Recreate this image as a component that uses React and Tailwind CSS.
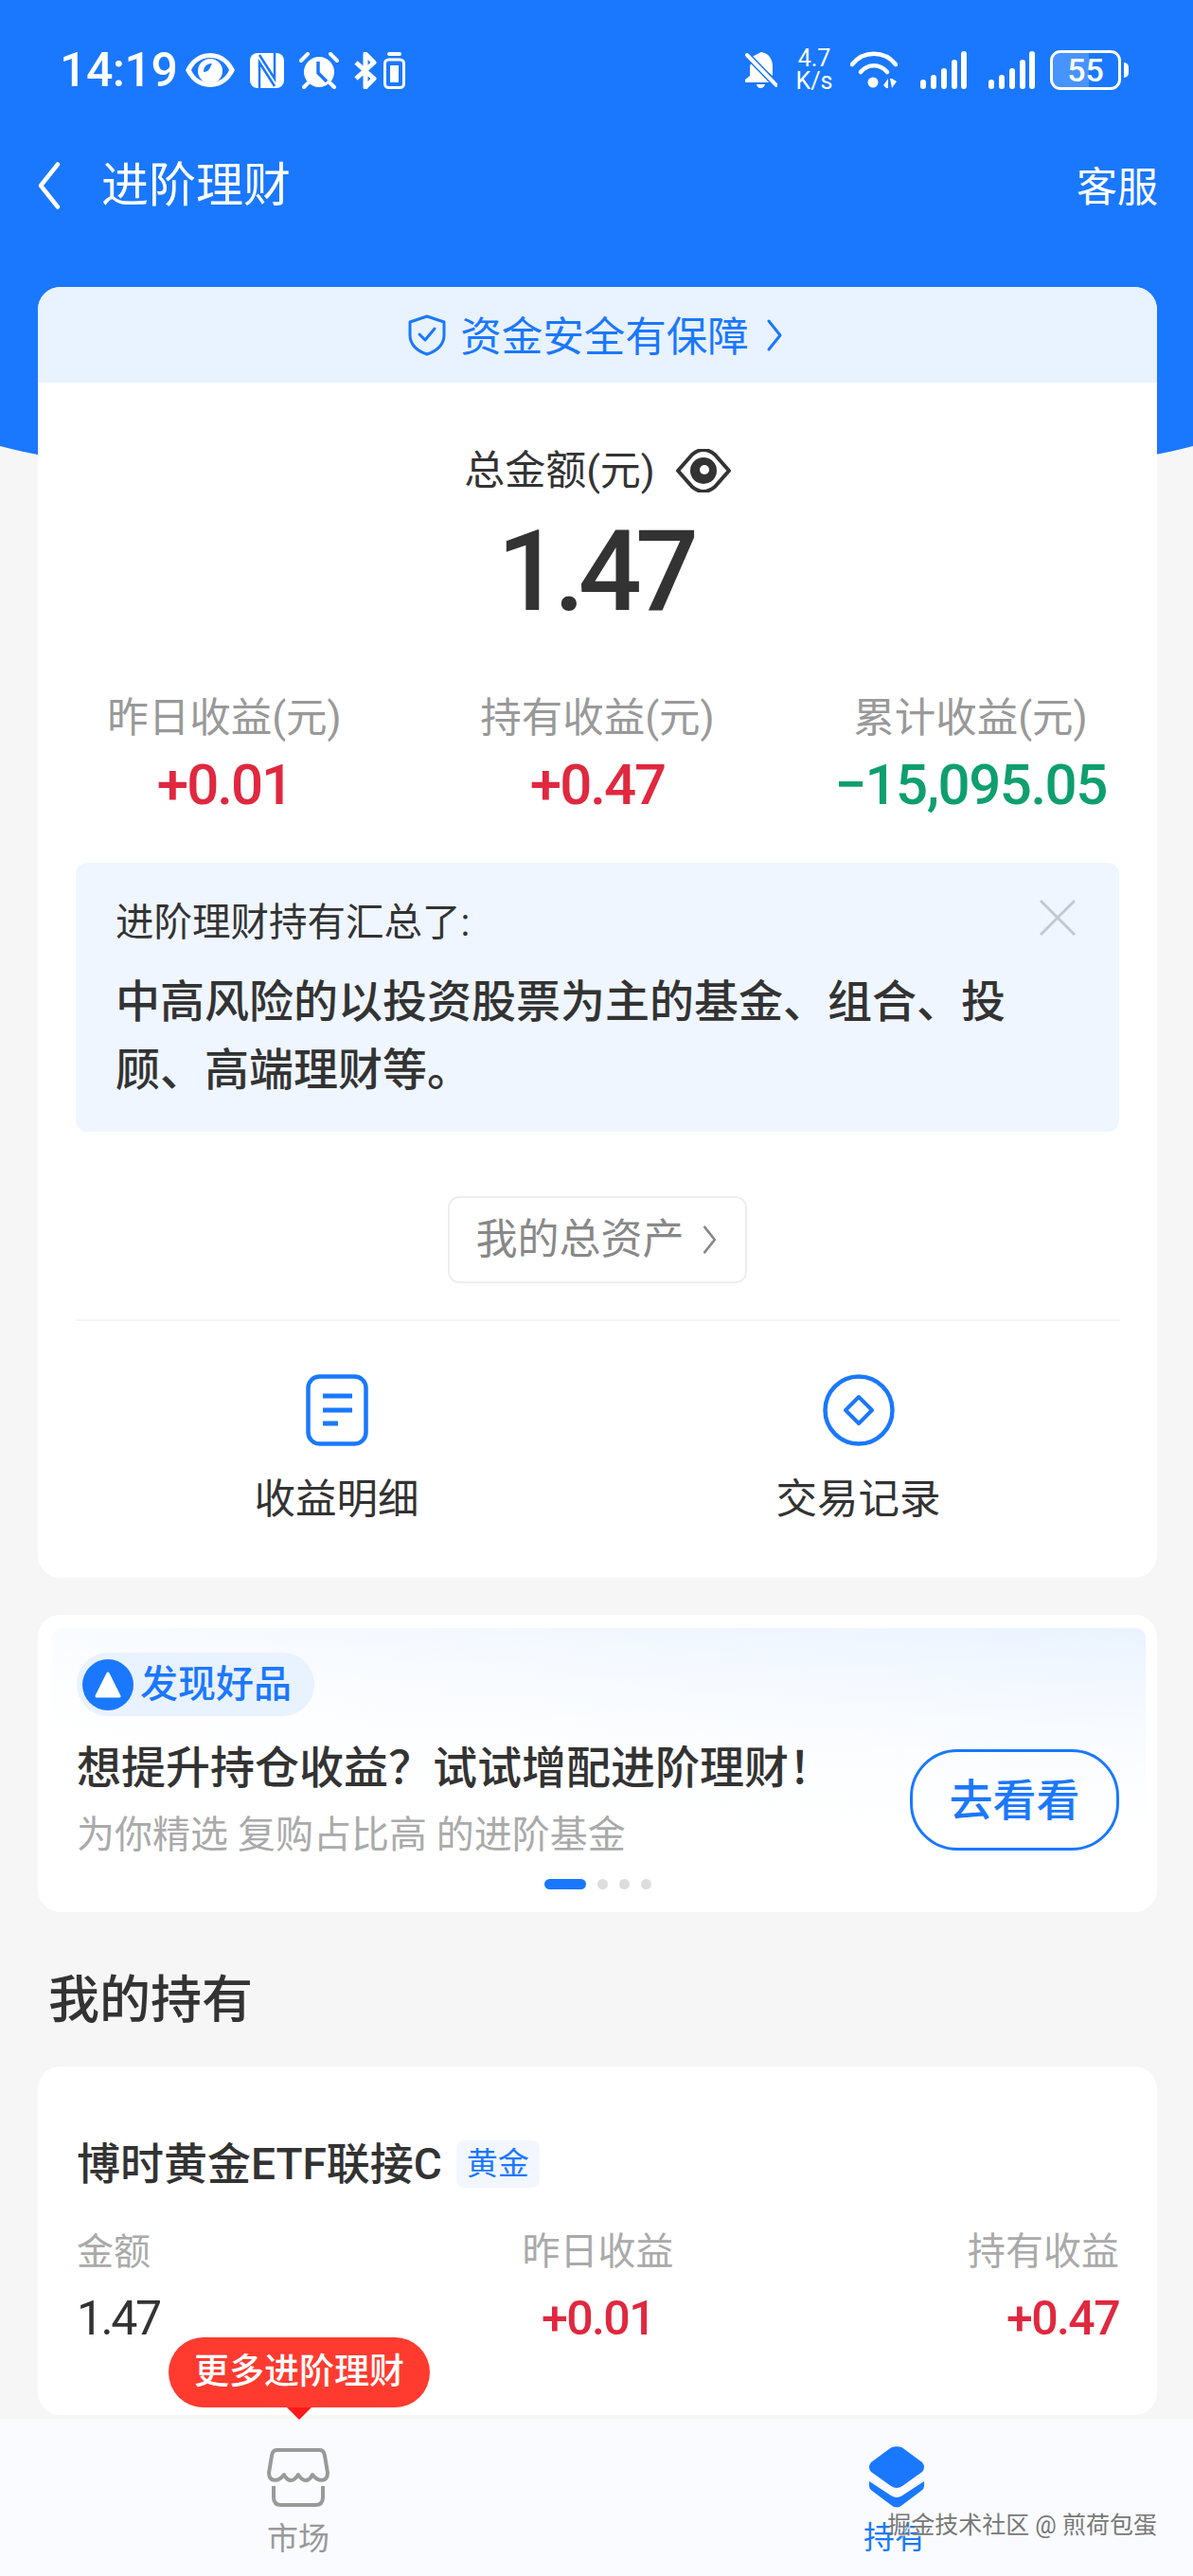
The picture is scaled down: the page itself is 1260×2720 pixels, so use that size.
import React from 'react';

const Stat = ({ label, value, color }) => (
  <div className="flex flex-col items-center">
    <p className="text-[43.5px] leading-[44px] text-[#999]">{label}</p>
    <p className={`mt-[25px] text-[60px] leading-[46px] font-medium ${color}`}>{value}</p>
  </div>
);

const Chevron = ({ className }) => (
  <svg viewBox="0 0 18 36" fill="none" stroke="currentColor" strokeWidth="3" strokeLinecap="round" strokeLinejoin="round" className={className}>
    <path d="M3 3 L15 18 L3 33" />
  </svg>
);

const StatusBar = () => (
  <div className="flex items-center justify-between h-[148px] pl-[63px] pr-[68px] text-white">
    <div className="flex items-center">
      <span className="text-[50px] leading-[48px] font-medium tracking-[-0.5px]">14:19</span>
      {/* eye */}
      <svg viewBox="0 0 52 36" className="w-[52px] h-[36px] ml-[9px]">
        <path fillRule="evenodd" fill="white" d="M26 0C39 0 48 9 52 18 48 27 39 36 26 36 13 36 4 27 0 18 4 9 13 0 26 0ZM26 5C16 5 9 11 6 18 9 25 16 31 26 31 36 31 43 25 46 18 43 11 36 5 26 5Z" />
        <circle cx="26" cy="19" r="13" fill="white" />
        <path d="M19 20C19 14 23 11 28 11 26 15 25 20 19 20Z" fill="#1a78ff" />
      </svg>
      {/* nfc */}
      <svg viewBox="0 0 36 37" className="w-[36px] h-[37px] ml-[16px]">
        <rect width="36" height="37" rx="8" fill="white" />
        <path d="M10 2L26 27V0M10 37V10L26 35" fill="none" stroke="#1a78ff" strokeWidth="2.5" />
      </svg>
      {/* alarm */}
      <svg viewBox="0 0 42 39" className="w-[42px] h-[39px] ml-[16px]">
        <circle cx="21" cy="21" r="16" fill="white" />
        <path d="M20 10V22L29 31" stroke="#1a78ff" strokeWidth="3.5" fill="none" />
        <path d="M2 9L9 2M40 9L33 2M9 33L5 37M33 33L37 37" stroke="white" strokeWidth="4" strokeLinecap="round" />
      </svg>
      {/* bluetooth + battery saver */}
      <svg viewBox="0 0 25 39" className="w-[25px] h-[39px] ml-[16px]" fill="none" stroke="white" strokeWidth="5">
        <path d="M2 11L21 28L12 37V2L21 11L2 28" strokeLinejoin="round" />
      </svg>
      <svg viewBox="0 0 23 39" className="w-[23px] h-[39px] ml-[6px]" fill="none" stroke="white">
        <path d="M6 2H17" strokeWidth="4" strokeLinecap="round" />
        <rect x="1.5" y="8" width="20" height="29.5" rx="4" strokeWidth="3" />
        <rect x="7" y="14" width="9" height="18" fill="white" stroke="none" />
      </svg>
    </div>
    <div className="flex items-center">
      {/* muted bell */}
      <svg viewBox="0 0 34 40" className="w-[34px] h-[40px]">
        <path fill="white" d="M17 1C25 2 29 9 29 16V26L3 8 M7 13L27 33H0V30L5 26V16Q5 14 7 13ZM12 35H21Q20 39 16 39 13 39 12 35Z" />
        <path d="M2 4L33 36" stroke="#1a78ff" strokeWidth="7" />
        <path d="M2 4L33 36" stroke="white" strokeWidth="4" strokeLinecap="round" />
      </svg>
      <div className="flex flex-col items-center w-[42px] ml-[18px] text-[25px] leading-[24px]">
        <span>4.7</span>
        <span>K/s</span>
      </div>
      {/* wifi */}
      <svg viewBox="0 0 50 40" className="w-[50px] h-[40px] ml-[17px]" fill="none" stroke="white" strokeLinecap="round" strokeWidth="4.5">
        <path d="M2 14C14 -1 36 -1 48 14" />
        <path d="M11 22C19 13 31 13 39 22" />
        <circle cx="24" cy="33" r="5.5" fill="white" stroke="none" />
        <path d="M35 36L40 29V39H38ZM42 29H44L49 32L44 39Z" fill="white" stroke="none" />
      </svg>
      {[0, 1].map(i => (
        <svg key={i} viewBox="0 0 49 40" className={`w-[49px] h-[40px] ${i ? 'ml-[23px]' : 'ml-[24px]'}`} fill="white">
          <rect x="0" y="30" width="6" height="10" rx="3" />
          <rect x="11" y="25" width="6" height="15" rx="3" />
          <rect x="22" y="18" width="6" height="22" rx="3" />
          <rect x="33" y="9" width="6" height="31" rx="3" />
          <rect x="43" y="0" width="6" height="40" rx="3" />
        </svg>
      ))}
      <div className="flex items-center ml-[16px]">
        <div className="relative w-[75px] h-[42px] border-[3px] border-white rounded-[11px] overflow-hidden flex items-center justify-center">
          <div className="absolute left-0 top-0 bottom-0 w-[55%] bg-white/20" />
          <span className="relative text-[34px] leading-[34px] font-medium">55</span>
        </div>
        <div className="w-[5px] h-[16px] bg-white rounded-r-full ml-[3px]" />
      </div>
    </div>
  </div>
);

export default function App() {
  return (
    <div className="relative w-[1260px] h-[2720px] overflow-hidden bg-[#f6f6f6] [font-family:Roboto,'Noto_Sans_CJK_SC',sans-serif] text-[#333]">
      {/* blue header backdrop */}
      <div className="absolute -left-[60px] top-0 w-[1380px] h-[519px] bg-[#1a78ff] rounded-b-[690px_81px]" />

      <div className="relative">
        <StatusBar />

        {/* Nav */}
        <div className="flex items-center justify-between h-[96px] pl-[36px] pr-[37px] text-white">
          <div className="flex items-center">
            <Chevron className="w-[32px] h-[54px] rotate-180" />
            <span className="ml-[39px] text-[50px] leading-[50px]">进阶理财</span>
          </div>
          <span className="text-[43px] leading-[50px] mt-[4px]">客服</span>
        </div>

        {/* Summary card */}
        <div className="ml-[40px] mr-[38px] mt-[59px] h-[1363px] bg-white rounded-[24px] overflow-hidden">
          <div className="flex items-center justify-center h-[101px] pr-[4px] bg-[#e9f2ff] text-[#1a78ff]">
            <svg viewBox="0 0 40 44" fill="none" stroke="currentColor" strokeWidth="3" strokeLinejoin="round" strokeLinecap="round" className="w-[40px] h-[44px]">
              <path d="M20 2L38 8V22C38 32 30 39 20 42 10 39 2 32 2 22V8Z" />
              <path d="M12 21L18 27L28 15" />
            </svg>
            <span className="ml-[15px] mt-[6px] text-[43.5px] leading-[48px]">资金安全有保障</span>
            <Chevron className="w-[18px] h-[36px] ml-[18px]" />
          </div>

          <div className="flex items-center justify-center mt-[70px]">
            <span className="text-[43px] leading-[46px]">总金额(元)</span>
            <svg viewBox="0 0 58 46" fill="none" className="w-[58px] h-[46px] ml-[22px]">
              <path d="M2 23L17 6Q29 -4 41 6L56 23 41 40Q29 50 17 40Z" stroke="#333" strokeWidth="4" strokeLinejoin="round" />
              <circle cx="29" cy="23" r="14" fill="#333" />
              <circle cx="30" cy="22" r="5" fill="white" />
            </svg>
          </div>

          <p className="mt-[34px] pr-[6px] text-center text-[118px] leading-[100px] font-medium tracking-[-7px]">1.47</p>

          <div className="grid grid-cols-3 mt-[83px]">
            <Stat label="昨日收益(元)" value="+0.01" color="tracking-[-2px] text-[#e0283f]" />
            <Stat label="持有收益(元)" value="+0.47" color="tracking-[-2px] text-[#e0283f]" />
            <Stat label="累计收益(元)" value="−15,095.05" color="tracking-[-1.5px] text-[#0e9f6e]" />
          </div>

          {/* Note */}
          <div className="relative mx-[40px] mt-[59px] h-[284px] bg-[#eff6ff] rounded-[12px] pl-[42px] pr-[40px] pt-[40px]">
            <p className="text-[40.5px] leading-[46px]">进阶理财持有汇总了:</p>
            <p className="mt-[25px] text-[47px] leading-[72px] font-medium">中高风险的以投资股票为主的基金、组合、投<br />顾、高端理财等。</p>
            <svg viewBox="0 0 40 40" stroke="#c4c9d0" strokeWidth="3" className="absolute right-[45px] top-[38px] w-[40px] h-[40px]">
              <path d="M2 2L38 38M38 2L2 38" />
            </svg>
          </div>

          <div className="flex justify-center mt-[68px]">
            <div className="flex items-center justify-center w-[316px] h-[92px] pr-[2px] border-2 border-[#eee] rounded-[12px] text-[#888]">
              <span className="text-[44px] leading-[48px]">我的总资产</span>
              <Chevron className="w-[17px] h-[32px] ml-[18px]" />
            </div>
          </div>

          <div className="mx-[40px] mt-[38px] h-[2px] bg-[#f4f4f4]" />

          {/* Shortcuts */}
          <div className="grid grid-cols-2 px-[40px] mt-[56px]">
            <div className="flex flex-col items-center">
              <svg viewBox="0 0 66 76" fill="none" stroke="#1a78ff" strokeWidth="4.5" className="w-[66px] h-[76px]">
                <rect x="2.5" y="2.5" width="61" height="71" rx="12" />
                <path d="M18 23H49M18 38H49M18 52H34" strokeWidth="5" />
              </svg>
              <span className="mt-[29px] text-[43.5px] leading-[56px]">收益明细</span>
            </div>
            <div className="flex flex-col items-center">
              <svg viewBox="0 0 78 76" fill="none" stroke="#1a78ff" strokeWidth="4.5" className="w-[78px] h-[76px]">
                <circle cx="39" cy="38" r="35.5" />
                <path d="M39 24L53 38L39 52L25 38Z" strokeWidth="4" strokeLinejoin="round" />
              </svg>
              <span className="mt-[29px] text-[43.5px] leading-[56px]">交易记录</span>
            </div>
          </div>
        </div>

        {/* Promo card */}
        <div className="relative ml-[40px] mr-[38px] mt-[39px] h-[314px] bg-white rounded-[24px] overflow-hidden">
          <div className="absolute left-[15px] right-[12px] top-[14px] h-[270px] rounded-[10px] bg-linear-to-bl from-[#eaf3ff] to-white to-70%" />
          <div className="absolute left-[15px] right-[12px] top-[14px] h-[270px] bg-linear-to-t from-white from-20% to-transparent" />
          <div className="relative pl-[41px] pr-[40px]">
            <div className="inline-flex items-center h-[67px] mt-[40px] w-[251px] pl-[6px] bg-[#e9f2ff] rounded-full">
              <div className="flex items-center justify-center w-[54px] h-[54px] rounded-full bg-[#1a78ff]">
                <svg viewBox="0 0 30 30" className="w-[30px] h-[30px]" fill="white" stroke="white" strokeWidth="3" strokeLinejoin="round">
                  <path d="M15 3L27 27H3Z" />
                </svg>
              </div>
              <span className="ml-[7px] text-[40px] leading-[46px] text-[#1a78ff] font-medium">发现好品</span>
            </div>
            <div className="flex items-start justify-between">
              <div>
                <p className="mt-[27px] text-[47px] leading-[56px] font-medium whitespace-nowrap">想提升持仓收益{'\uFF1F'}试试增配进阶理财{'\uFF01'}</p>
                <p className="mt-[18px] text-[40px] leading-[50px] text-[#aaa]">为你精选 复购占比高 的进阶基金</p>
              </div>
              <div className="flex items-center justify-center w-[221px] h-[107px] mt-[35px] -ml-[40px] border-[3px] border-[#1a78ff] rounded-[50px] text-[46px] leading-[50px] font-medium text-[#1a78ff]">去看看</div>
            </div>
          </div>
          <div className="absolute bottom-[24px] left-0 right-0 flex justify-center gap-[12px]">
            <div className="w-[44px] h-[11px] rounded-full bg-[#1a78ff]" />
            <div className="w-[11px] h-[11px] rounded-full bg-[#ddd]" />
            <div className="w-[11px] h-[11px] rounded-full bg-[#ddd]" />
            <div className="w-[11px] h-[11px] rounded-full bg-[#ddd]" />
          </div>
        </div>

        <h2 className="ml-[51px] mt-[62px] text-[54px] leading-[64px] font-medium">我的持有</h2>

        {/* Holding card */}
        <div className="ml-[40px] mr-[38px] mt-[37px] h-[368px] bg-white rounded-[24px] pl-[41px] pr-[40px] pt-[76px]">
          <div className="flex items-center">
            <span className="text-[46px] leading-[54px] font-medium">博时黄金ETF联接C</span>
            <span className="ml-[15px] flex items-center justify-center w-[88px] h-[50px] bg-[#f2f7ff] rounded-[8px] text-[33px] text-[#1a78ff]">黄金</span>
          </div>
          <div className="grid grid-cols-3 mt-[44px]">
            <div>
              <p className="text-[39px] leading-[44px] text-[#aaa]">金额</p>
              <p className="mt-[26px] text-[50px] leading-[44px] tracking-[-2.5px]">1.47</p>
            </div>
            <div className="text-center">
              <p className="text-[40px] leading-[44px] text-[#aaa]">昨日收益</p>
              <p className="mt-[26px] text-[50px] leading-[44px] font-medium tracking-[-1.6px] text-[#e0283f]">+0.01</p>
            </div>
            <div className="text-right">
              <p className="text-[40px] leading-[44px] text-[#aaa]">持有收益</p>
              <p className="mt-[26px] text-[50px] leading-[44px] font-medium tracking-[-1.6px] text-[#e0283f]">+0.47</p>
            </div>
          </div>
        </div>
      </div>

      {/* Bottom tab bar */}
      <div className="absolute left-0 right-0 bottom-0 h-[166px] bg-[#f9fbff] grid grid-cols-2">
        <div className="flex flex-col items-center pt-[31px]">
          <svg viewBox="0 0 66 62" fill="none" stroke="#999" strokeWidth="4" strokeLinejoin="round" className="w-[66px] h-[62px]">
            <path d="M10 2H56Q60 2 61 8L64 26C64 36 54 36 48 28 44 36 38 36 33 28 28 36 22 36 18 28 12 36 2 36 2 26L5 8Q6 2 10 2Z" />
            <path d="M7 40V52Q7 60 15 60H51Q59 60 59 52V40" />
          </svg>
          <span className="mt-[14px] text-[33px] leading-[40px] text-[#999]">市场</span>
        </div>
        <div className="flex flex-col items-center pt-[29px]">
          <svg viewBox="0 0 60 66" className="w-[60px] h-[66px] ml-[3px]" fill="#1a78ff">
            <path d="M24 1.5Q30 -1 36 1.5L57 17Q61 22 57 27L36 42Q30 46 24 42L3 27Q-1 22 3 17Z" />
            <path d="M1 37L24 52Q30 56 36 52L59 37V42Q59 45 56 47L36 62Q30 67 24 62L4 47Q1 45 1 42Z" />
          </svg>
          <span className="mt-[11px] text-[33px] leading-[40px] text-[#1a78ff]">持有</span>
        </div>
      </div>

      {/* Tooltip */}
      <div className="absolute left-[178px] top-[2468px] flex flex-col items-center">
        <div className="flex items-center justify-center w-[276px] h-[74px] bg-[#ff3b30] rounded-[37px] text-[37px] leading-[44px] font-medium text-white">更多进阶理财</div>
        <div className="w-0 h-0 border-l-[13px] border-r-[13px] border-t-[13px] border-l-transparent border-r-transparent border-t-[#ff1a1a]" />
      </div>

      {/* Watermark */}
      <span className="absolute right-[38px] top-[2648px] text-[25px] leading-[38px] text-[#777] [text-shadow:1px_1px_1px_white]">掘金技术社区 @ 煎荷包蛋</span>
    </div>
  );
}
